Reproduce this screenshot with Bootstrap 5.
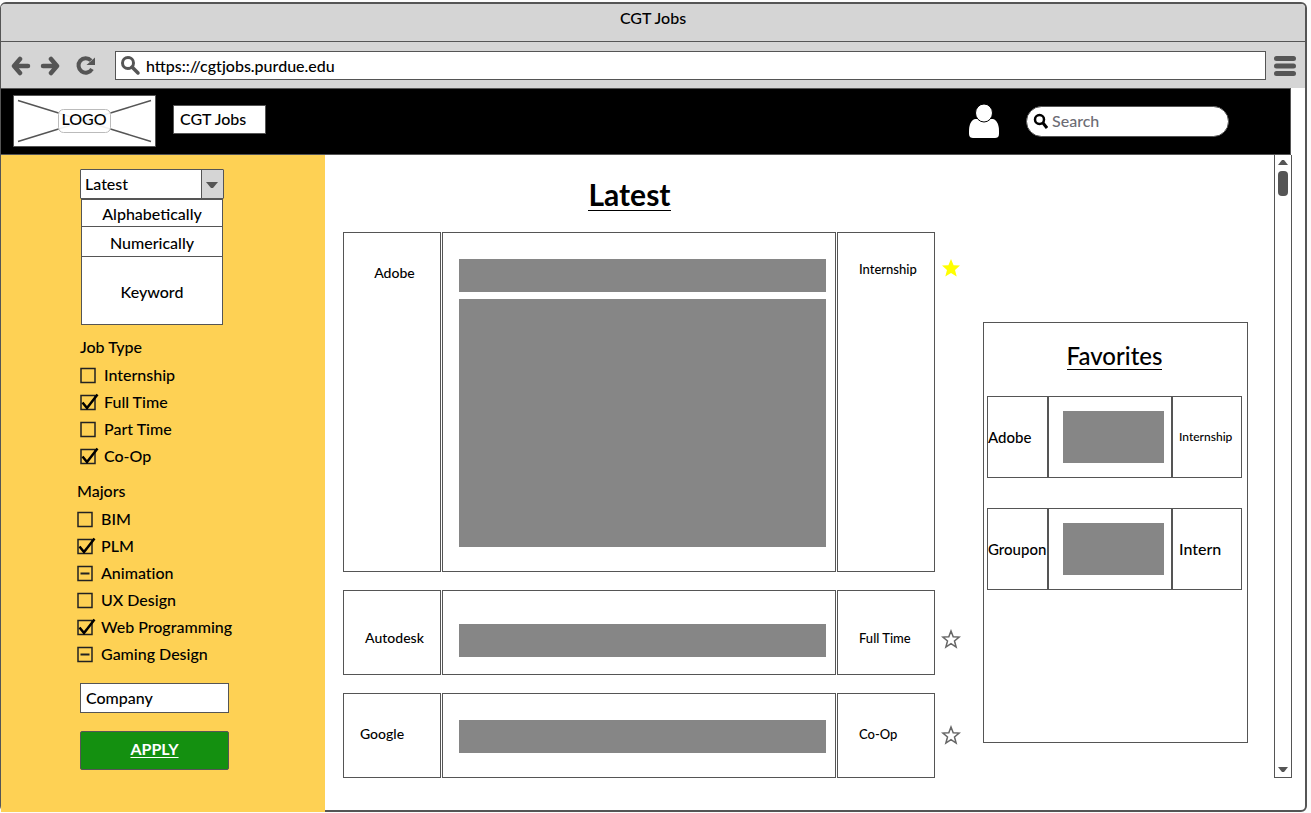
<!DOCTYPE html>
<html lang="en">
<head>
<meta charset="utf-8">
<meta name="viewport" content="width=device-width, initial-scale=1">
<title>CGT Jobs</title>
<link href="https://cdn.jsdelivr.net/npm/bootstrap@5.3.0/dist/css/bootstrap.min.css" rel="stylesheet">
<style>
  :root { --line: #555; --chrome: #d5d5d5; --gold: #fed154; }
  body { font-family: Lato, "Open Sans", sans-serif; font-size: 16px; line-height: 20px; font-weight: 500; font-variant-ligatures: none; color: #000; background: #fcfcfc; }
  .browser { min-height: 100vh; padding: 2px 4px 1px 0; }
  .frame { border: 2px solid var(--line); border-left-width: 1px; border-radius: 6px; background: #fff; }
  .titlebar { height: 38px; padding-top: 4px; background: var(--chrome); border-bottom: 1px solid var(--line); border-radius: 4px 4px 0 0; }
  .toolbar { height: 46px; padding: 1px 9px 0; background: var(--chrome); }
  .tool { padding: 0; border: 0; background: none; line-height: 0; }
  .next { margin: 0 14px 0 9px; }
  .address { height: 29px; border: 1px solid var(--line); background: #fff; margin-left: 18px; padding-left: 4px; }
  .plain-input { border: 0; background: none; padding: 0; outline-offset: 2px; font-weight: 500; color: #000; min-width: 0; }
  .topnav { height: 67px; margin-right: 14px; padding: 0 61px 1px 12px; background: #000; border: solid var(--line); border-width: 1px 1px 1px 0; }
  .site-name { width: 93px; height: 29px; margin: 0 0 3px 17px; padding: 3px 6px; background: #fff; border: 1px solid var(--line); color: #000; text-decoration: none; }
  .search { width: 203px; height: 31px; margin-left: 26px; border-radius: 16px; background: #fff; border: 1px solid var(--line); padding: 0 6px; }
  .search input { color: #6c6c74; }
  .search input::placeholder { color: #6c6c74; opacity: 1; }
  .sidebar { flex: 0 0 324px; margin-bottom: -2px; padding: 14px 90px 30px 76px; background: var(--gold); }
  .inset { margin: 0 0 0 3px; }
  .sorter { width: 144px; height: 30px; padding: 0 28px 0 4px; appearance: none; border: 1px solid var(--line); border-radius: 1px; color: #000; font-weight: 500;
    background: #fff url("data:image/svg+xml,%3Csvg xmlns='http://www.w3.org/2000/svg' width='22' height='28'%3E%3Cpath fill='%23d5d5d5' d='M0 0h22v28H0z'/%3E%3Cpath stroke='%23555' d='M.5 0v28'/%3E%3Cpath fill='%23555' d='M5 12h12l-5 6h-2z'/%3E%3C/svg%3E") right top no-repeat; }
  .sort-list { width: 142px; margin-left: 4px; border: 1px solid var(--line); background: #fff; }
  .sort-list button { height: 30px; padding: 2px 0 0; border: 0; border-bottom: 1px solid var(--line); background: none; font-weight: 500; }
  .sort-list button:first-child { height: 27px; }
  .sort-list button:last-child { height: 67px; border-bottom: 0; }
  .group-name { font-size: 16px; line-height: 20px; margin: 0; float: none; width: auto; }
  .tick { display: flex; gap: 5px; align-items: center; height: 27px; white-space: nowrap; }
  .tick input { appearance: none; width: 19px; height: 18px; margin: 0; background: url("data:image/svg+xml,%3Csvg xmlns='http://www.w3.org/2000/svg' width='19' height='18'%3E%3Cpath fill='none' stroke='%23222' stroke-width='1.500' d='M1 2.500h14v14H1z'/%3E%3C/svg%3E") no-repeat; }
  .tick input:checked { background-image: url("data:image/svg+xml,%3Csvg xmlns='http://www.w3.org/2000/svg' width='19' height='18'%3E%3Cpath fill='none' stroke='%23222' stroke-width='1.500' d='M1 2.500h14v14H1z'/%3E%3Cpath fill='none' stroke='%23000' stroke-width='2.500' d='M2.500 9.500 7 15 17.500 1.500'/%3E%3C/svg%3E"); }
  .tick input:indeterminate { background-image: url("data:image/svg+xml,%3Csvg xmlns='http://www.w3.org/2000/svg' width='19' height='18'%3E%3Cpath fill='none' stroke='%23222' stroke-width='1.500' d='M1 2.500h14v14H1z'/%3E%3Cpath stroke='%23222' stroke-width='2' d='M3.500 9.500h9'/%3E%3C/svg%3E"); }
  .filters { margin-top: 12px; }
  .company { width: 149px; height: 30px; border: 1px solid var(--line); padding: 0 5px 2px; color: #000; font-weight: 500; }
  .company::placeholder { color: #000; opacity: 1; }
  .apply { width: 149px; height: 39px; margin-top: 18px; padding: 0 0 3px; border: 1px solid var(--line); border-radius: 2px; background: #149010; color: #fff; font-weight: 700; text-decoration: underline; text-underline-offset: 2px; }
  .content { padding: 0 26px 30px 18px; min-width: 0; }
  .big-title { font-size: 30px; line-height: 32px; font-weight: 700; border-bottom: 1px solid #000; margin: 0 44px 21px 0; }
  .job-col { padding-top: 23px; min-width: 0; }
  .job-list { display: grid; row-gap: 18px; }
  .job { display: grid; grid-template-columns: 98px minmax(0, 1fr) 98px 24px; column-gap: 1px; font-size: 14px; line-height: 28px; }
  .cell { border: 1px solid var(--line); padding-top: 26px; min-height: 85px; }
  .job.low .cell { padding-top: 33px; }
  .cell.who { padding-left: 5px; text-align: center; }
  .job.near .who { padding-left: 0; padding-right: 20px; }
  .cell.kind { padding-left: 21px; font-size: 13px; }
  .cell.info { padding-left: 16px; padding-right: 9px; padding-bottom: 16px; }
  .job.tall .info { padding-bottom: 24px; }
  .job.tall .kind { padding-top: 22px; }
  .bar { height: 33px; background: #868686; }
  .block { height: 248px; margin-top: 7px; background: #868686; }
  .star { align-self: start; margin: 32px 0 0 5px; padding: 0; border: 0; background: none; line-height: 0; width: 20px; }
  .job.low .star { margin-top: 39px; }
  .job.tall .star { margin-top: 26px; }
  .favorites { flex: 0 0 265px; margin: 167px 0 37px 23px; padding: 20px 5px 0 3px; border: 1px solid var(--line); }
  .fav-title { font-size: 24px; line-height: 26px; font-weight: 500; border-bottom: 1px solid #000; margin: 0 0 26px; }
  .fav { display: grid; grid-template-columns: 59px 1fr 68px; border: 1px solid var(--line); height: 82px; margin-bottom: 30px; align-items: center; }
  .fav > :first-child { font-size: 15px; }
  .fav > :nth-child(2) { height: 80px; padding: 14px 7px 14px 14px; border: solid var(--line); border-width: 0 2px; }
  .fav > :nth-child(3) { padding-left: 6px; }
  .thumb { height: 52px; background: #868686; }
  .tiny { font-size: 12px; }
  .rail { flex: 0 0 18px; margin: 0 13px 32px 0; padding: 4px 0; border: 1px solid var(--line); border-top: 0; }
  .thumb-bar { width: 10px; height: 25px; margin-top: 6px; border-radius: 4px; background: var(--line); }
</style>
</head>
<body>
<div class="browser d-flex">
  <div class="frame d-flex flex-column flex-grow-1">
    <div class="titlebar text-center">CGT Jobs</div>

    <div class="toolbar d-flex align-items-center">
      <button class="tool" aria-label="Back"><svg width="21" height="20"><path d="M10 3 4 10l6 7M5 10h13" fill="none" stroke="#555" stroke-width="4.500" stroke-linecap="round" stroke-linejoin="round"/></svg></button>
      <button class="tool next" aria-label="Forward"><svg width="21" height="20"><path d="m11 3 6 7-6 7M3 10h13" fill="none" stroke="#555" stroke-width="4.500" stroke-linecap="round" stroke-linejoin="round"/></svg></button>
      <button class="tool" aria-label="Reload"><svg width="22" height="20"><path d="M16 4.500A7.200 7.200 0 1 0 17 13" fill="none" stroke="#555" stroke-width="4"/><path d="M20 1.500V9h-8.500z" fill="#555"/></svg></button>
      <label class="address d-flex align-items-center flex-grow-1 me-2">
        <svg class="me-1 flex-shrink-0" width="22" height="21" aria-hidden="true"><circle cx="8" cy="8" r="5.500" fill="none" stroke="#555" stroke-width="3"/><path d="m12 12 6 6" stroke="#555" stroke-width="3.500" stroke-linecap="round"/></svg>
        <input class="plain-input flex-grow-1" type="text" value="https:://cgtjobs.purdue.edu" aria-label="Address">
      </label>
      <button class="tool" aria-label="Menu"><svg width="22" height="22"><path d="M2.500 3.500h17M2.500 11h17M2.500 18.500h17" stroke="#555" stroke-width="5" stroke-linecap="round"/></svg></button>
    </div>

    <nav class="topnav d-flex align-items-center">
      <a href="#" aria-label="Logo"><svg width="143" height="52" viewBox="0 0 143 52"><path d="M.5.5h142v51H.500z" fill="#fff" stroke="#555"/><path d="m5 5.500 133 41M5 46.500l133-41" stroke="#555" stroke-width="1.500"/><rect x="45.500" y="14.500" width="52" height="23" rx="5" fill="#fff" fill-opacity=".92" stroke="#bbb"/><text x="71" y="30" text-anchor="middle" font-size="16" font-weight="500">LOGO</text></svg></a>
      <a class="site-name" href="#">CGT Jobs</a>
      <a class="ms-auto" href="#" aria-label="Account"><svg width="32" height="36" viewBox="0 0 32 36"><path d="M7 16h18c4 1 6 6 6 12v3c0 3-2 4-4 4H5c-2 0-4-1-4-4v-3c0-6 2-11 6-12z" fill="#fff"/><ellipse cx="16" cy="10" rx="8.500" ry="9" fill="#fff" stroke="#000" stroke-width="1"/></svg></a>
      <label class="search d-flex align-items-center">
        <svg class="me-1 flex-shrink-0" width="15" height="16" aria-hidden="true"><circle cx="6.500" cy="6.500" r="4.500" fill="none" stroke="#000" stroke-width="2.500"/><path d="m10 10 4 5" stroke="#000" stroke-width="3"/></svg>
        <input class="plain-input flex-grow-1" type="search" placeholder="Search" aria-label="Search">
      </label>
    </nav>

    <div class="d-flex flex-grow-1">
      <aside class="sidebar">
        <form>
          <select class="sorter inset d-block" aria-label="Sort by"><option>Latest</option><option>Alphabetically</option><option>Numerically</option><option>Keyword</option></select>
          <div class="sort-list d-flex flex-column">
            <button type="button">Alphabetically</button>
            <button type="button">Numerically</button>
            <button type="button">Keyword</button>
          </div>
          <fieldset class="inset filters">
            <legend class="group-name mb-1">Job Type</legend>
            <label class="tick"><input type="checkbox">Internship</label>
            <label class="tick"><input type="checkbox" checked>Full Time</label>
            <label class="tick"><input type="checkbox">Part Time</label>
            <label class="tick"><input type="checkbox" checked>Co-Op</label>
          </fieldset>
          <fieldset class="filters">
            <legend class="group-name mb-1">Majors</legend>
            <label class="tick"><input type="checkbox">BIM</label>
            <label class="tick"><input type="checkbox" checked>PLM</label>
            <label class="tick"><input type="checkbox" data-mixed>Animation</label>
            <label class="tick"><input type="checkbox">UX Design</label>
            <label class="tick"><input type="checkbox" checked>Web Programming</label>
            <label class="tick"><input type="checkbox" data-mixed>Gaming Design</label>
          </fieldset>
          <input class="company inset d-block mt-3" type="text" placeholder="Company" aria-label="Company">
          <button class="inset apply d-block" type="submit">APPLY</button>
        </form>
      </aside>

      <main class="content d-flex flex-grow-1 align-items-start">
        <section class="job-col flex-grow-1">
          <div class="text-center"><h1 class="big-title d-inline-block">Latest</h1></div>
          <div class="job-list">
            <article class="job tall">
              <div class="cell who">Adobe</div>
              <div class="cell info"><div class="bar"></div><div class="block"></div></div>
              <div class="cell kind">Internship</div>
              <button class="star" aria-label="Remove Adobe from favorites"><svg width="20" height="20"><path d="m10 1 2.600 6.200 6.400.4-5 4.300 1.700 6.600L10 14.900l-5.700 3.600L6 11.900 1 7.600l6.400-.4z" fill="#ff0"/></svg></button>
            </article>
            <article class="job low">
              <div class="cell who">Autodesk</div>
              <div class="cell info"><div class="bar"></div></div>
              <div class="cell kind">Full Time</div>
              <button class="star" aria-label="Add Autodesk to favorites"><svg width="20" height="20"><path d="m10 2 2.200 5.700 6 .4-4.700 3.900 1.600 6L10 14.600 4.900 18l1.600-6-4.700-3.900 6-.4z" fill="none" stroke="#666" stroke-width="1.500"/></svg></button>
            </article>
            <article class="job near">
              <div class="cell who">Google</div>
              <div class="cell info"><div class="bar"></div></div>
              <div class="cell kind">Co-Op</div>
              <button class="star" aria-label="Add Google to favorites"><svg width="20" height="20"><path d="m10 2 2.200 5.700 6 .4-4.700 3.900 1.600 6L10 14.600 4.900 18l1.600-6-4.700-3.900 6-.4z" fill="none" stroke="#666" stroke-width="1.500"/></svg></button>
            </article>
          </div>
        </section>

        <section class="favorites align-self-stretch">
          <div class="text-center"><h2 class="fav-title d-inline-block">Favorites</h2></div>
          <div class="fav"><span>Adobe</span><div><div class="thumb"></div></div><span class="tiny">Internship</span></div>
          <div class="fav"><span>Groupon</span><div><div class="thumb"></div></div><span>Intern</span></div>
        </section>
      </main>

      <div class="rail d-flex flex-column align-items-center" aria-hidden="true">
        <svg width="10" height="6"><path d="M0 6h10L6 1H4z" fill="#555"/></svg>
        <div class="thumb-bar"></div>
        <svg class="mt-auto" width="10" height="6"><path d="M0 0h10L6 5H4z" fill="#555"/></svg>
      </div>
    </div>
  </div>
</div>
<script src="https://cdn.jsdelivr.net/npm/bootstrap@5.3.0/dist/js/bootstrap.bundle.min.js"></script>
<script>
  document.querySelectorAll('[data-mixed]').forEach(box => { box.indeterminate = true; });
</script>
</body>
</html>
